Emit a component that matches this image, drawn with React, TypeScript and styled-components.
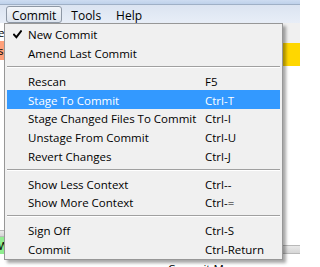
import React from "react";
import styled, { createGlobalStyle } from "styled-components";

const Global = createGlobalStyle`
  html, body { margin: 0; padding: 0; background: #ffffff; }
  body { font-family: "Open Sans", "Noto Sans", "DejaVu Sans", sans-serif; }
`;

const Window = styled.div`
  position: relative;
  width: 300px;
  height: 267px;
  overflow: hidden;
  display: flex;
  flex-direction: column;
  background: #ffffff;
  font-family: "Open Sans", "Noto Sans", "DejaVu Sans", sans-serif;
  font-size: 11.5px;
  color: #000;
`;

const TitleStrip = styled.div`
  height: 4px;
  flex: none;
  background: linear-gradient(#cddcf1, #bed1ea);
  border-bottom: 1px solid #9fb0c6;
`;

const MenuBar = styled.div`
  height: 18px;
  flex: none;
  box-sizing: border-box;
  display: flex;
  gap: 3px;
  padding: 1px 0 0 6px;
  background: linear-gradient(#dbe4f1, #e8eef7);
`;

const MenuTitle = styled.div<{ $open?: boolean }>`
  height: 17px;
  box-sizing: border-box;
  padding: 1px 5px 0;
  display: flex;
  align-items: center;
  font-size: 12px;
  border: 1px solid ${(p) => (p.$open ? "#8e98a5" : "transparent")};
  border-radius: 3px;
  background: ${(p) => (p.$open ? "linear-gradient(#f3f6fa, #dce3ed)" : "transparent")};
`;

const Body = styled.div`
  flex: 1;
  display: grid;
  grid-template-columns: 140px 1fr;
  min-height: 0;
`;

const Pane = styled.div`
  display: flex;
  flex-direction: column;
  min-height: 0;
  overflow: hidden;
`;

const Strip = styled.div<{ $h: number; $bg: string }>`
  height: ${(p) => p.$h}px;
  flex: none;
  background: ${(p) => p.$bg};
  display: flex;
  align-items: center;
  white-space: nowrap;
  overflow: hidden;
`;

const Fill = styled.div`
  flex: 1;
  background: #ffffff;
`;

const Divider = styled.div<{ $h: number }>`
  height: ${(p) => p.$h}px;
  flex: none;
  box-sizing: border-box;
  background: linear-gradient(#e9e9e9, #d6d6d6);
  border-top: 1px solid #b9b9b9;
  border-bottom: 1px solid #b9b9b9;
`;

const SliverText = styled.span`
  margin-left: -2px;
`;

const FootStrip = styled.div`
  height: 13px;
  flex: none;
  background: #ffffff;
  display: flex;
  align-items: flex-start;
  overflow: hidden;
  white-space: nowrap;
`;

const FootText = styled.span`
  padding: 7px 0 0 28px;
`;

const Dropdown = styled.div`
  position: absolute;
  top: 23px;
  left: 4px;
  width: 279px;
  box-sizing: border-box;
  background: #f0f0f0;
  border: 1px solid #979797;
  padding: 1px 2px;
  box-shadow: 3px 3px 3px rgba(0, 0, 0, 0.35);
`;

const Item = styled.div<{ $active?: boolean }>`
  height: 18.7px;
  box-sizing: border-box;
  padding-top: 1px;
  display: grid;
  grid-template-columns: 21px 177px 1fr;
  align-items: center;
  white-space: nowrap;
  background: ${(p) => (p.$active ? "#3399ff" : "transparent")};
  color: ${(p) => (p.$active ? "#ffffff" : "#000000")};
`;

const Gutter = styled.span`
  display: flex;
  justify-content: center;
  align-items: center;
`;

const Separator = styled.div`
  height: 9.3px;
  display: flex;
  flex-direction: column;
  justify-content: center;
  &::after {
    content: "";
    height: 1px;
    background: #a0a0a0;
    border-bottom: 1px solid #ffffff;
  }
`;

const Check = () => (
  <svg width="9" height="9" viewBox="0 0 9 9">
    <path d="M1 4.6 L3.4 7.2 L8 1.2" fill="none" stroke="#000" strokeWidth="1.9" strokeLinecap="square" />
  </svg>
);

type Entry = { label: string; key?: string; checked?: boolean; active?: boolean } | "sep";

const entries: Entry[] = [
  { label: "New Commit", checked: true },
  { label: "Amend Last Commit" },
  "sep",
  { label: "Rescan", key: "F5" },
  { label: "Stage To Commit", key: "Ctrl-T", active: true },
  { label: "Stage Changed Files To Commit", key: "Ctrl-I" },
  { label: "Unstage From Commit", key: "Ctrl-U" },
  { label: "Revert Changes", key: "Ctrl-J" },
  "sep",
  { label: "Show Less Context", key: "Ctrl--" },
  { label: "Show More Context", key: "Ctrl-=" },
  "sep",
  { label: "Sign Off", key: "Ctrl-S" },
  { label: "Commit", key: "Ctrl-Return" },
];

export default function App() {
  return (
    <Window>
      <Global />
      <TitleStrip />
      <MenuBar>
        <MenuTitle $open>Commit</MenuTitle>
        <MenuTitle>Tools</MenuTitle>
        <MenuTitle>Help</MenuTitle>
      </MenuBar>
      <Body>
        <Pane>
          <Strip $h={18} $bg="#ffffff">
            <SliverText>er</SliverText>
          </Strip>
          <Strip $h={19} $bg="#ffa07a">
            <SliverText>s</SliverText>
          </Strip>
          <Fill />
          <Divider $h={7} />
          <Strip $h={17} $bg="#90ee90">
            <SliverText>Will Commit)</SliverText>
          </Strip>
          <Strip $h={13} $bg="#ffffff" />
        </Pane>
        <Pane>
          <Strip $h={20} $bg="#f0f0f0" />
          <Strip $h={23} $bg="#ffd700" />
          <Fill />
          <Divider $h={9} />
          <FootStrip>
            <FootText>Commit Message:</FootText>
          </FootStrip>
        </Pane>
      </Body>
      <Dropdown>
        {entries.map((e, i) =>
          e === "sep" ? (
            <Separator key={i} />
          ) : (
            <Item key={i} $active={e.active}>
              <Gutter>{e.checked ? <Check /> : null}</Gutter>
              <span>{e.label}</span>
              <span>{e.key ?? ""}</span>
            </Item>
          )
        )}
      </Dropdown>
    </Window>
  );
}
